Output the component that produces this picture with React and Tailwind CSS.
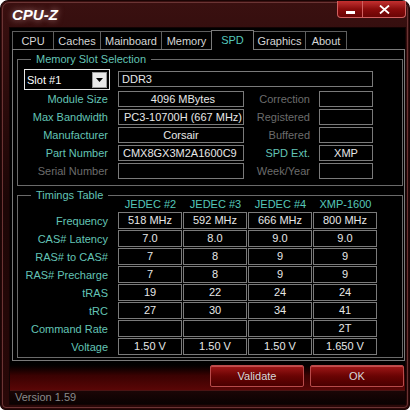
import React from 'react'

const info = [
  { label: 'Module Size', value: '4096 MBytes', align: 'text-right pr-[28px]', rl: 'Correction', rv: '' },
  { label: 'Max Bandwidth', value: 'PC3-10700H (667 MHz)', align: 'text-left pl-[5px]', rl: 'Registered', rv: '' },
  { label: 'Manufacturer', value: 'Corsair', align: 'text-center', rl: 'Buffered', rv: '' },
  { label: 'Part Number', value: 'CMX8GX3M2A1600C9', align: 'text-left pl-[4px]', rl: 'SPD Ext.', rv: 'XMP', active: true },
  { label: 'Serial Number', value: '', align: 'text-left', rl: 'Week/Year', rv: '', dim: true },
]

const heads = ['JEDEC #2', 'JEDEC #3', 'JEDEC #4', 'XMP-1600']
const timings = [
  ['Frequency', '518 MHz', '592 MHz', '666 MHz', '800 MHz'],
  ['CAS# Latency', '7.0', '8.0', '9.0', '9.0'],
  ['RAS# to CAS#', '7', '8', '9', '9'],
  ['RAS# Precharge', '7', '8', '9', '9'],
  ['tRAS', '19', '22', '24', '24'],
  ['tRC', '27', '30', '34', '41'],
  ['Command Rate', '', '', '', '2T'],
  ['Voltage', '1.50 V', '1.50 V', '1.50 V', '1.650 V'],
]

const tabs = [
  ['CPU', 'w-[42px]'],
  ['Caches', 'w-[48px]'],
  ['Mainboard', 'w-[62px]'],
  ['Memory', 'w-[51px]'],
  ['SPD', 'w-[43px]'],
  ['Graphics', 'w-[53px]'],
  ['About', 'w-[42px]'],
]

function Group({ title, className, children }) {
  return (
    <fieldset className={`border border-[#6a6a6a] ${className}`}>
      <legend className="ml-[8px] px-[5px] text-[11px] leading-[12px] text-[#63c4b6] whitespace-nowrap">{title}</legend>
      {children}
    </fieldset>
  )
}

export default function App() {
  return (
    <div className="w-[417px] h-[414px] bg-white overflow-hidden font-['Liberation_Sans',Arial,sans-serif] text-[11px]">
      {/* window */}
      <div className="relative w-[410px] h-[410px] rounded-t-[8px] rounded-b-[5px] border border-[#1a0505] bg-gradient-to-b from-[#3a1010] via-[#1c0606] to-[#2a0808] p-px">
        <div className="h-full rounded-t-[7px] rounded-b-[4px] border border-[#6b3434] flex flex-col">
          {/* title bar */}
          <div className="h-[24px] shrink-0 flex items-start pl-[9px] pt-[4px]">
            <span className="text-[15px] leading-[16px] font-bold italic text-white [text-shadow:0_0_6px_rgba(255,200,200,0.6)]">
              CPU-Z
            </span>
          </div>
          <div className="absolute top-0 right-[3px] flex">
            <div className="w-[26px] h-[17px] rounded-bl-[4px] border border-[#d06060] border-t-0 bg-gradient-to-b from-[#c43030] via-[#8a0c0c] to-[#6a0505] flex items-end justify-center pb-[3px]">
              <div className="w-[9px] h-[3px] bg-white" />
            </div>
            <div className="w-[43px] h-[17px] rounded-br-[4px] border border-l-0 border-[#d06060] border-t-0 bg-gradient-to-b from-[#c43030] via-[#8a0c0c] to-[#6a0505] flex items-center justify-center">
              <svg width="11" height="9" viewBox="0 0 11 9">
                <path d="M1 0.5L10 8.5M10 0.5L1 8.5" stroke="#fff" strokeWidth="1.8" />
              </svg>
            </div>
          </div>

          {/* client area */}
          <div className="ml-[6px] mr-px flex-1 border border-[#120303] bg-black flex flex-col">
            {/* tabs */}
            <div className="flex items-end h-[21px] pl-[2px]">
              {tabs.map(([t, w]) =>
                t === 'SPD' ? (
                  <div key={t} className={`${w} h-[20px] border border-b-0 border-[#7a7a7a] -ml-px bg-black text-center text-[#55c8ba] text-[11px] leading-[18px] relative top-px z-10`}>
                    {t}
                  </div>
                ) : (
                  <div key={t} className={`${w} h-[18px] border border-b-0 border-[#5e5e5e] -ml-px first:ml-0 bg-black text-center text-[#d6d6d6] text-[11px] leading-[18px]`}>
                    {t}
                  </div>
                )
              )}
            </div>
            {/* panel */}
            <div className="ml-[2px] h-[312px] border border-[#7a7a7a] pl-[4px] pr-px pt-[3px] flex flex-col gap-[3px]">
              <Group title="Memory Slot Selection" className="h-[133px] pl-[5px] pr-[3px]">
                <div className="flex items-start gap-[8px] mt-[4px] ml-px">
                  <div className="w-[86px] h-[21px] border border-[#e6e6e6] bg-black flex items-center justify-between pl-[2px] pr-[2px]">
                    <span className="text-white text-[11px] leading-[14px]">Slot #1</span>
                    <div className="w-[15px] h-[16px] bg-[#e8e8e8] border border-[#9a9a9a] flex items-center justify-center">
                      <svg width="7" height="4" viewBox="0 0 7 4"><path d="M0 0h7L3.5 4z" fill="#000" /></svg>
                    </div>
                  </div>
                  <div className="mt-[2px] w-[255px] h-[16px] border border-[#7a7a7a] text-[#e8e8e8] text-[11px] leading-[14px] pl-[3px]">DDR3</div>
                </div>
                <div className="flex flex-col gap-[2px] mt-[1px]">
                  {info.map((r) => (
                    <div key={r.label} className="flex items-center h-[16px]">
                      <div className={`w-[85px] text-right whitespace-nowrap text-[11px] leading-[14px] ${r.dim ? 'text-[#6c6c6c]' : 'text-[#63c4b6]'}`}>{r.label}</div>
                      <div className={`ml-[10px] w-[126px] h-[16px] border border-[#7a7a7a] whitespace-nowrap text-[#e8e8e8] text-[11px] leading-[14px] ${r.align}`}>{r.value}</div>
                      <div className={`w-[66px] text-right whitespace-nowrap text-[11px] leading-[14px] ${r.active ? 'text-[#63c4b6]' : 'text-[#6c6c6c]'}`}>{r.rl}</div>
                      <div className="ml-[9px] w-[54px] h-[16px] border border-[#7a7a7a] text-[#e8e8e8] text-[11px] leading-[14px] text-center">{r.rv}</div>
                    </div>
                  ))}
                </div>
              </Group>

              <Group title="Timings Table" className="h-[169px] pl-[5px] pr-[3px]">
                <div className="flex h-[12px] items-center -mt-[3px]">
                  <div className="w-[95px]" />
                  {heads.map((h) => (
                    <div key={h} className="w-[65px] text-center text-[#55c8ba] text-[11px] leading-[12px]">{h}</div>
                  ))}
                </div>
                <div className="flex flex-col gap-px mt-[2px]">
                  {timings.map(([l, ...vals]) => (
                    <div key={l} className="flex items-center h-[17px]">
                      <div className="w-[85px] flex justify-end whitespace-nowrap text-[11px] leading-[14px] text-[#63c4b6]">{l}</div>
                      <div className="ml-[10px] flex gap-px">
                        {vals.map((v, i) => (
                          <div key={i} className="w-[64px] h-[17px] border border-[#7a7a7a] text-center text-[#e8e8e8] text-[11px] leading-[15px]">{v}</div>
                        ))}
                      </div>
                    </div>
                  ))}
                </div>
              </Group>
            </div>

            {/* bottom buttons */}
            <div className="flex-1 bg-gradient-to-b from-black via-[#3a0202] to-[#5a0606] flex flex-col">
              <div className="flex justify-end gap-[6px] pr-px pt-[4px]">
                {['Validate', 'OK'].map((b) => (
                  <div key={b} className="w-[94px] h-[22px] rounded-[2px] border border-[#b84a4a] bg-gradient-to-b from-[#a01818] via-[#6a0404] to-[#4a0000] text-center text-[#d8d8d8] text-[11px] leading-[20px] shadow-[inset_0_1px_0_rgba(255,160,160,0.4)]">
                    {b}
                  </div>
                ))}
              </div>
            </div>
            <div className="h-[14px] shrink-0 border-t border-[#4a1414] bg-gradient-to-b from-[#1a0606] to-[#0a0202] pl-[5px] text-[11px] leading-[13px] text-[#8a8a8a]">
              Version 1.59
            </div>
          </div>
          <div className="h-[2px] shrink-0" />
        </div>
      </div>
    </div>
  )
}
